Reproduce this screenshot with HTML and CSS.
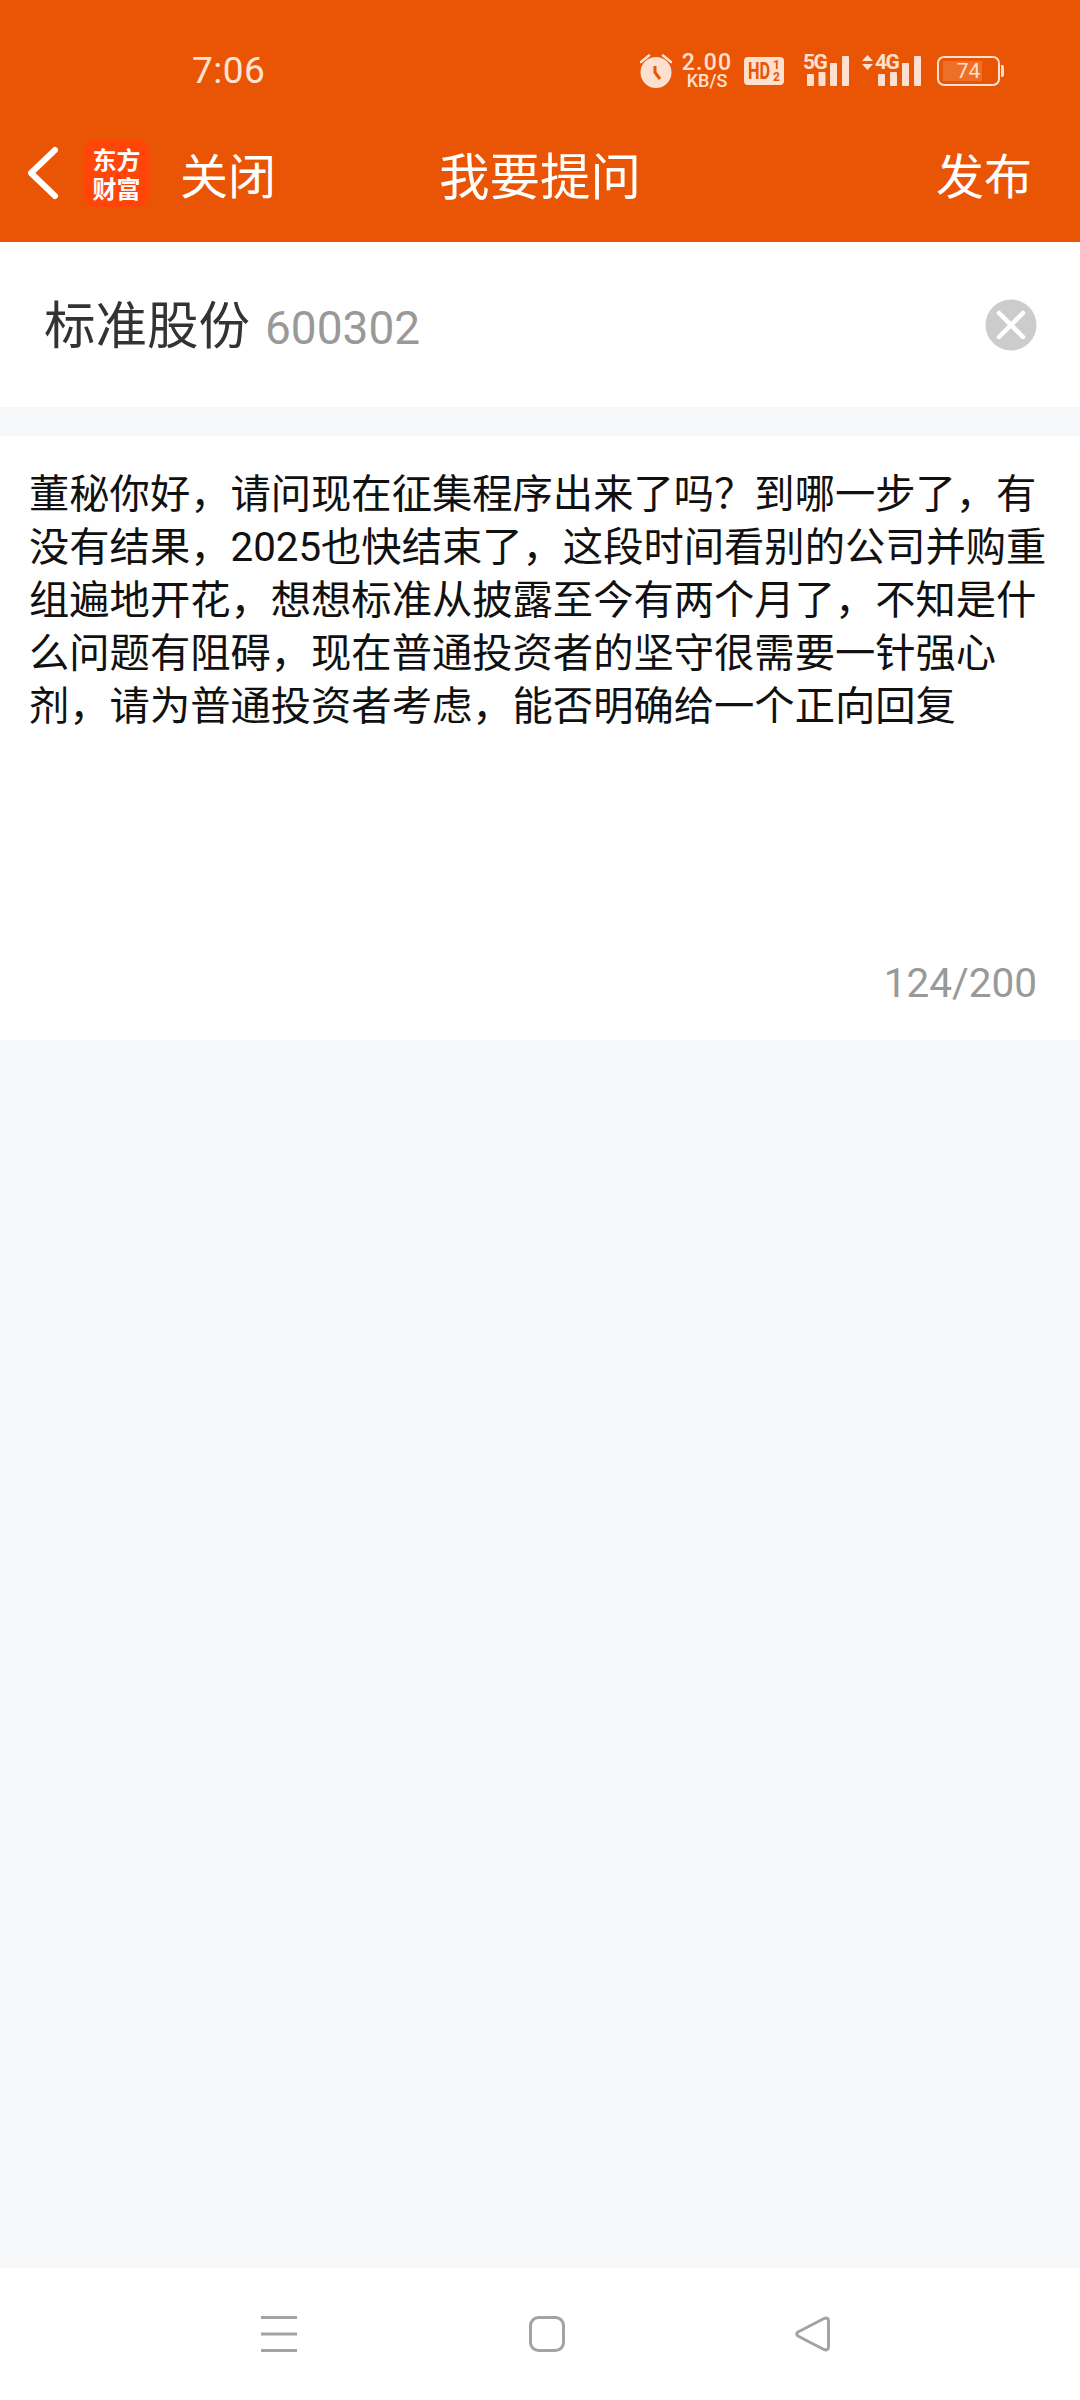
FILE: index.html
```html
<!DOCTYPE html>
<html lang="zh">
<head>
<meta charset="utf-8">
<title>我要提问</title>
<link rel="stylesheet" href="styles.css">
</head>
<body>
<div class="app">
  <header class="top">
    <div class="status">
      <span class="time">7:06</span>
      <div class="status-icons">
        <svg class="ic-alarm" width="32" height="34" viewBox="0 0 32 34"><path d="M1 8 9 1.500M31 8 23 1.500" stroke="#fde0cf" stroke-width="2.600" stroke-linecap="round" fill="none"/><circle cx="16" cy="18.500" r="15.500" fill="#fde0cf"/><path d="M15 12V18.500L20 25" stroke="#e95504" stroke-width="3" fill="none"/></svg>
        <div class="speed"><span class="speed-num">2.00</span><span class="speed-unit">KB/S</span></div>
        <div class="hd"><span class="hd-t">HD</span><span class="hd-s">1<br>2</span></div>
        <div class="sig sig-5g"><span class="sig-t">5G</span>
          <svg class="bars" width="42" height="30" viewBox="0 0 42 30"><rect x="0" y="18" width="7" height="12" rx="1"/><rect x="11.500" y="16" width="7" height="14" rx="1"/><rect x="23" y="7" width="7" height="23" rx="1"/><rect x="35" y="0" width="7" height="30" rx="1"/></svg>
        </div>
        <div class="sig sig-4g"><svg class="arrows" width="11" height="15" viewBox="0 0 11 15"><path d="M5.500 0 11 6H0ZM5.500 15 0 9H11Z"/></svg><span class="sig-t">4G</span>
          <svg class="bars" width="43" height="30" viewBox="0 0 43 30"><rect x="0" y="18" width="7" height="12" rx="1"/><rect x="12" y="16" width="7" height="14" rx="1"/><rect x="24" y="7" width="7" height="23" rx="1"/><rect x="36" y="0" width="7" height="30" rx="1"/></svg>
        </div>
        <div class="battery"><div class="bat-body"><div class="bat-fill"></div><span class="bat-num">74</span></div><div class="bat-tip"></div></div>
      </div>
    </div>
    <nav class="bar">
      <div class="bar-left">
        <svg class="back" width="34" height="56" viewBox="0 0 34 56"><path d="M30 5 6 28 30 51" stroke="#fff" stroke-width="6" fill="none" stroke-linecap="round" stroke-linejoin="round"/></svg>
        <div class="logo"><span>东方</span><span>财富</span></div>
        <span class="close">关闭</span>
      </div>
      <span class="title">我要提问</span>
      <span class="publish">发布</span>
    </nav>
  </header>
  <section class="stock">
    <div class="stock-info"><span class="stock-name">标准股份</span><span class="stock-code">600302</span></div>
    <svg class="clear" width="52" height="52" viewBox="0 0 52 52"><circle cx="26" cy="26" r="25.500" fill="#cccccc"/><path d="M14 14 38 38M38 14 14 38" stroke="#fff" stroke-width="4.500" stroke-linecap="round"/></svg>
  </section>
  <section class="question">
    <p class="q-text">董秘你好，请问现在征集程序出来了吗？到哪一步了，有<br>没有结果，2025也快结束了，这段时间看别的公司并购重<br>组遍地开花，想想标准从披露至今有两个月了，不知是什<br>么问题有阻碍，现在普通投资者的坚守很需要一针强心<br>剂，请为普通投资者考虑，能否明确给一个正向回复</p>
    <div class="count">124/200</div>
  </section>
  <div class="spacer"></div>
  <footer class="navbar">
    <svg width="36" height="36" viewBox="0 0 36 36"><path d="M0 1.500H36M0 18H36M0 34.500H36" stroke="#a3a3a3" stroke-width="3"/></svg>
    <svg width="36" height="36" viewBox="0 0 36 36"><rect x="1.500" y="1.500" width="33" height="33" rx="8" stroke="#a3a3a3" stroke-width="3" fill="none"/></svg>
    <svg class="nav-back" width="36" height="36" viewBox="0 0 36 36"><path d="M29 2.500 3 16Q0.500 18 3 20Q16 27 29 33.500Q33.500 35 33.500 31V5Q33.500 1 29 2.500Z" stroke="#a3a3a3" stroke-width="3" fill="none" stroke-linejoin="round"/></svg>
  </footer>
</div>
</body>
</html>
```
FILE: styles.css
```css
* { box-sizing: border-box; margin: 0; padding: 0; }
html, body { width: 1080px; height: 2400px; overflow: hidden; }
body { font-family: Roboto, "Noto Sans CJK SC", sans-serif; background: #f7f8fa; }
.app { width: 1080px; height: 2400px; display: flex; flex-direction: column; }

.top { height: 242px; background: #e95504; color: #fff; flex: none; }
.status { height: 110px; display: flex; align-items: center; justify-content: space-between; padding: 0 76px 0 192px; color: #fde0cf; }
.time { font-size: 37px; line-height: 40px; margin-top: 31px; color: #fde3d4; letter-spacing: .5px; }
.status-icons { display: flex; align-items: center; margin-top: 31px; }
.ic-alarm { display: block; margin-right: 10px; }
.speed { display: flex; flex-direction: column; align-items: center; width: 50px; margin-right: 12px; font-weight: 500; }
.speed-num { font-size: 23px; line-height: 20px; letter-spacing: 1.200px; white-space: nowrap; }
.speed-unit { font-size: 18px; line-height: 16px; white-space: nowrap; }
.hd { width: 40px; height: 28px; background: #fde0cf; border-radius: 4px; color: #e95504; display: flex; align-items: center; justify-content: center; margin-right: 19px; font-weight: 700; overflow: hidden; }
.hd-t { font-size: 24px; line-height: 24px; display: block; width: 24px; white-space: nowrap; transform: scaleX(.68); transform-origin: left center; }
.hd-s { font-size: 12px; line-height: 12px; margin-left: 1px; text-align: center; }
.sig { position: relative; display: flex; align-items: flex-end; justify-content: flex-end; height: 31px; }
.sig svg { fill: #fde0cf; display: block; }
.sig-t { position: absolute; top: -3px; font-size: 21px; line-height: 21px; font-weight: 700; letter-spacing: -1.500px; color: #fde0cf; }
.sig-5g { width: 46px; margin-right: 13px; }
.sig-5g .sig-t { left: 0; }
.sig-4g { width: 59px; margin-right: 16px; }
.sig-4g .sig-t { left: 13px; }
.sig-4g .arrows { position: absolute; left: 0; top: 0; }
.battery { display: flex; align-items: center; }
.bat-body { position: relative; width: 63px; height: 30px; border: 2px solid #fde0cf; border-radius: 7px; padding: 3px 4px; }
.bat-fill { width: 39px; height: 100%; background: #ee6f26; }
.bat-num { position: absolute; inset: 0; text-align: center; font-size: 21px; line-height: 26px; color: #fde0cf; }
.bat-tip { width: 3px; height: 12px; background: #fde0cf; border-radius: 0 2px 2px 0; margin-left: 1px; }

.bar { height: 132px; position: relative; display: flex; align-items: center; justify-content: space-between; padding: 0 48px 6px 25px; font-size: 48px; font-family: "Noto Sans CJK SC", sans-serif; }
.bar-left { display: flex; align-items: center; }
.back { display: block; margin-right: 24px; }
.logo { width: 67px; height: 67px; border-radius: 14px; background: #ff4507; display: flex; flex-direction: column; align-items: center; justify-content: center; font-size: 24px; line-height: 29px; font-weight: 700; margin-right: 30px; }
.close { line-height: 66px; }
.title { position: absolute; left: 439px; top: 0; height: 126px; line-height: 126px; font-size: 50.500px; }
.publish { line-height: 66px; }

.stock { height: 165px; flex: none; background: #fff; display: flex; align-items: center; justify-content: space-between; padding: 0 43px 0 44px; }
.stock-info { display: flex; align-items: baseline; margin-bottom: 6px; }
.stock-name { font-family: "Noto Sans CJK SC", sans-serif; font-size: 51.500px; color: #333; margin-right: 15px; }
.stock-code { font-size: 46px; color: #999; }
.clear { display: block; }

.question { margin-top: 29px; height: 604px; flex: none; background: #fff; padding: 32px 29px 0; display: flex; flex-direction: column; justify-content: space-between; }
.q-text { font-size: 40.300px; line-height: 53px; color: #111; white-space: nowrap; font-family: Roboto, "Noto Sans CJK SC", sans-serif; }
.count { text-align: right; font-size: 40.500px; line-height: 48px; color: #999; padding: 0 14px 33px 0; }

.spacer { flex: 1; }
.navbar { height: 132px; flex: none; background: #fff; display: flex; align-items: center; padding: 0 0 0 261px; gap: 232px; }
.navbar svg { display: block; }
.navbar .nav-back { margin-left: -2px; }
```
